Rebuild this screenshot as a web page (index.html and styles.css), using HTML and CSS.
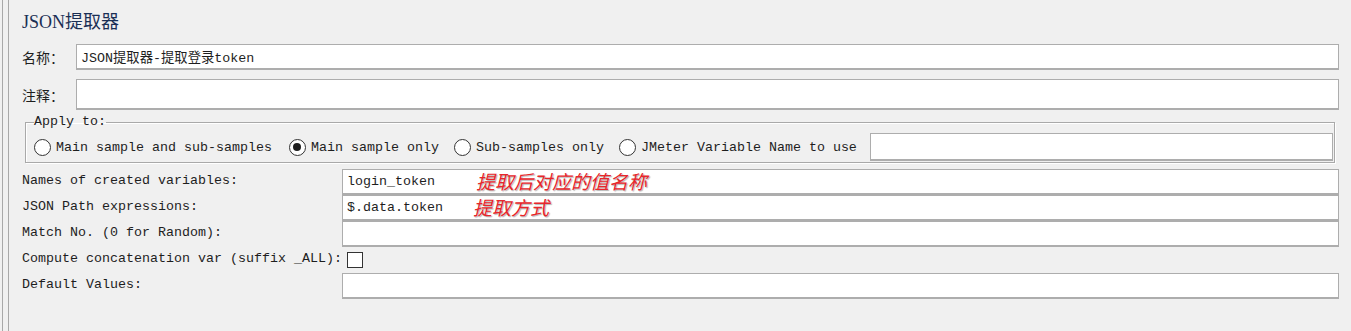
FILE: index.html
```html
<!DOCTYPE html>
<html lang="zh-CN">
<head>
    <meta charset="UTF-8">
    <title>JSON提取器</title>
    <link rel="stylesheet" href="styles.css">
</head>
<body>
    <div class="shell">
        <div class="panel">
            <h1 class="title">JSON提取器</h1>

            <div class="top-row name-row">
                <label class="cn-label" for="name">名称：</label>
                <input type="text" id="name" class="field" value="JSON提取器-提取登录token">
            </div>
            <div class="top-row comment-row">
                <label class="cn-label" for="comment">注释：</label>
                <input type="text" id="comment" class="field">
            </div>

            <fieldset class="apply">
                <legend>Apply to:</legend>
                <div class="radios">
                    <label class="opt"><span class="radio"></span>Main sample and sub-samples</label>
                    <label class="opt"><span class="radio checked"></span>Main sample only</label>
                    <label class="opt"><span class="radio"></span>Sub-samples only</label>
                    <label class="opt"><span class="radio"></span>JMeter Variable Name to use</label>
                    <input type="text" class="field var-name">
                </div>
            </fieldset>

            <div class="vars">
                <div class="lbl">Names of created variables:</div>
                <div class="cell">
                    <input type="text" class="field" value="login_token">
                    <span class="note note-1">提取后对应的值名称</span>
                </div>

                <div class="lbl">JSON Path expressions:</div>
                <div class="cell">
                    <input type="text" class="field" value="$.data.token">
                    <span class="note note-2">提取方式</span>
                </div>

                <div class="lbl">Match No. (0 for Random):</div>
                <div class="cell"><input type="text" class="field"></div>

                <div class="lbl">Compute concatenation var (suffix _ALL):</div>
                <div class="cell"><span class="check"></span></div>

                <div class="lbl">Default Values:</div>
                <div class="cell"><input type="text" class="field"></div>
            </div>
        </div>
    </div>
</body>
</html>
```

FILE: styles.css
```css
* {
    box-sizing: border-box;
}
html, body {
    margin: 0;
    height: 100%;
}
body {
    background-color: #f0f0f0;
    font-family: "Liberation Mono", "Noto Sans CJK SC", monospace;
    font-size: 13.33px;
    color: #1e1e1e;
    overflow: hidden;
}
.shell {
    margin-left: 2px;
    border-left: 1px solid #a8a8a8;
    height: 100%;
}
.panel {
    margin-left: 5px;
    border-left: 1px solid #a8a8a8;
    height: 100%;
    padding: 10px 12px 0 13px;
}
.title {
    margin: 0;
    font-family: "Liberation Serif", "Noto Sans CJK SC", serif;
    font-size: 18px;
    font-weight: normal;
    line-height: 24px;
    color: #1a2f55;
}
.top-row {
    display: flex;
    align-items: center;
}
.name-row {
    margin-top: 10px;
    height: 26px;
}
.comment-row {
    margin-top: 9px;
    height: 31px;
}
.cn-label {
    width: 54px;
    font-family: "Noto Sans CJK SC", sans-serif;
    font-size: 14px;
}
.field {
    flex: 1;
    width: 100%;
    height: 100%;
    margin: 0;
    padding: 0 4px;
    background: #fff;
    border: 1px solid #adadad;
    border-bottom-width: 2px;
    border-radius: 0;
    font-family: "Liberation Mono", "Noto Sans CJK SC", monospace;
    font-size: 13.33px;
    color: #1e1e1e;
    outline: none;
}
.apply {
    margin: 4px 4px 6px 3px;
    padding: 3px 1px 1px 8px;
    border: 1px solid #a9a9a9;
    box-shadow: inset 1px 1px 0 #fff, 1px 1px 0 #fff;
}
.apply legend {
    padding: 0;
    line-height: 16px;
}
.radios {
    display: flex;
    align-items: center;
    height: 28px;
}
.opt {
    display: flex;
    align-items: center;
    margin-right: 17px;
    white-space: nowrap;
}
.opt:nth-child(2),
.opt:nth-child(3) {
    margin-right: 15px;
}
.opt:nth-child(4) {
    margin-right: 13px;
}
.radio {
    position: relative;
    width: 17px;
    height: 17px;
    margin-right: 5px;
    border: 1px solid #333;
    border-radius: 50%;
    background: #fff;
}
.radio.checked {
    border-width: 1.5px;
}
.radio.checked::after {
    content: "";
    position: absolute;
    left: 3px;
    top: 3px;
    width: 8px;
    height: 8px;
    border-radius: 50%;
    background: #1e1e1e;
}
.var-name {
    height: 28px;
}
.vars {
    display: grid;
    grid-template-columns: 320px 1fr;
    grid-auto-rows: 26px;
}
.lbl {
    padding-top: 4px;
    line-height: 16px;
    white-space: nowrap;
}
.cell {
    position: relative;
    display: flex;
}
.note {
    position: absolute;
    top: 0;
    font-family: "Noto Sans CJK SC", sans-serif;
    font-size: 19px;
    font-style: italic;
    line-height: 24px;
    color: #e8262b;
    text-shadow: 1px 1px 1px rgba(0,0,0,0.3);
    pointer-events: none;
}
.note-1 {
    left: 134px;
}
.note-2 {
    left: 131px;
}
.check {
    width: 16px;
    height: 16px;
    margin: 5px 0 0 5px;
    background: #fff;
    border: 1px solid #333;
}
```
